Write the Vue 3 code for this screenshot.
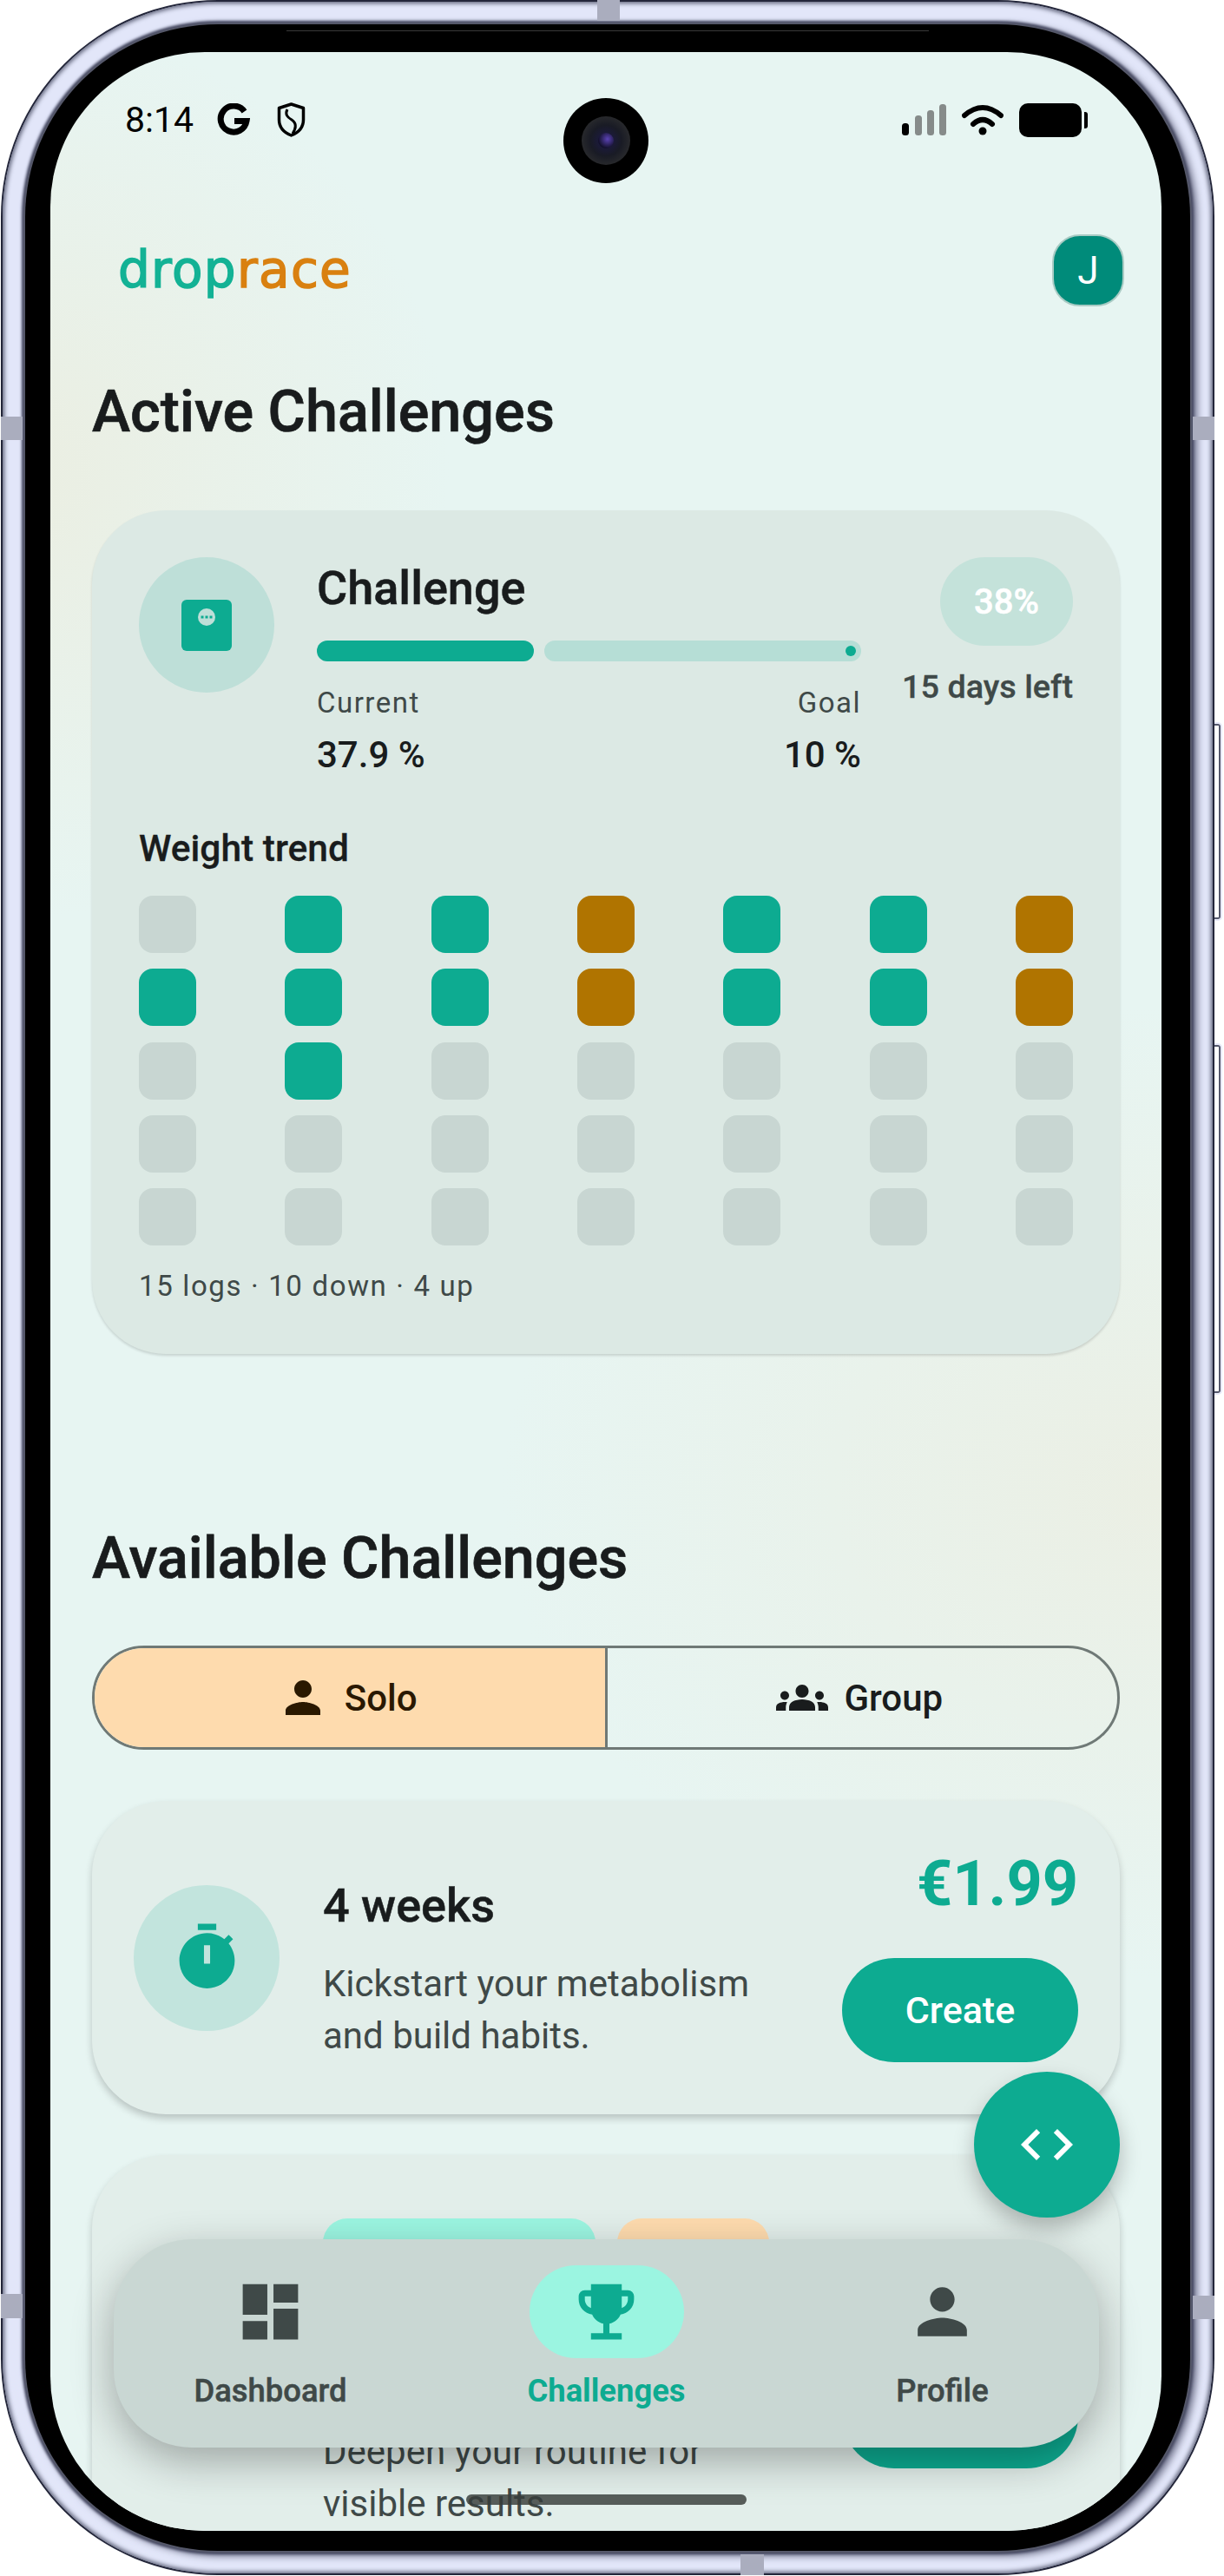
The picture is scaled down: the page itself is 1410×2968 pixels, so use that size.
<script setup>
const T = 't', O = 'o', G = 'g'
const columns = [
  [G, T, G, G, G],
  [T, T, T, G, G],
  [T, T, G, G, G],
  [O, O, G, G, G],
  [T, T, G, G, G],
  [T, T, G, G, G],
  [O, O, G, G, G],
]
const navItems = [
  { label: 'Dashboard', path: 'M3 13h8V3H3v10zm0 8h8v-6H3v6zm10 0h8V11h-8v10zm0-18v6h8V3h-8z' },
  { label: 'Challenges', active: true, path: 'M19 5h-2V3H7v2H5c-1.1 0-2 .9-2 2v1c0 2.55 1.92 4.63 4.39 4.94.63 1.5 1.98 2.63 3.61 2.96V19H7v2h10v-2h-4v-3.1c1.63-.33 2.98-1.46 3.61-2.96C19.08 12.63 21 10.55 21 8V7c0-1.1-.9-2-2-2zM5 8V7h2v3.82C5.84 10.4 5 9.3 5 8zm14 0c0 1.3-.84 2.4-2 2.82V7h2v1z' },
  { label: 'Profile', path: 'M12 12c2.21 0 4-1.79 4-4s-1.79-4-4-4-4 1.79-4 4 1.79 4 4 4zm0 2c-2.67 0-8 1.34-8 4v2h16v-2c0-2.66-5.33-4-8-4z' },
]
const timerPath = 'M15 1H9v2h6V1zm4.03 6.39l1.42-1.42c-.43-.51-.9-.99-1.41-1.41l-1.42 1.42C16.07 4.74 14.12 4 12 4c-4.97 0-9 4.03-9 9s4.02 9 9 9 9-4.03 9-9c0-2.12-.74-4.07-1.97-5.61zM13 14h-2V8h2v6z'
const personPath = 'M12 12c2.21 0 4-1.79 4-4s-1.79-4-4-4-4 1.79-4 4 1.79 4 4 4zm0 2c-2.67 0-8 1.34-8 4v2h16v-2c0-2.66-5.33-4-8-4z'
const groupPath = 'M12 12.75c1.63 0 3.07.39 4.24.9 1.08.48 1.76 1.56 1.76 2.73V18H6v-1.61c0-1.18.68-2.26 1.76-2.73 1.17-.52 2.61-.91 4.24-.91zM4 13c1.1 0 2-.9 2-2s-.9-2-2-2-2 .9-2 2 .9 2 2 2zm1.13 1.1C4.76 14.04 4.39 14 4 14c-.99 0-1.93.21-2.78.58C.48 14.9 0 15.62 0 16.43V18h4.5v-1.61c0-.83.23-1.61.63-2.29zM20 13c1.1 0 2-.9 2-2s-.9-2-2-2-2 .9-2 2 .9 2 2 2zm4 3.43c0-.81-.48-1.53-1.22-1.85C21.93 14.21 20.99 14 20 14c-.39 0-.76.04-1.13.1.4.68.63 1.46.63 2.29V18H24v-1.57zM12 6c1.66 0 3 1.34 3 3s-1.34 3-3 3-3-1.34-3-3 1.34-3 3-3z'
</script>

<template>
  <div class="page">
    <div class="side-btn btn-a"></div>
    <div class="side-btn btn-b"></div>
    <div class="rim">
      <div class="band">
        <div class="edge">
          <div class="bezel">
            <div class="screen">
              <div class="status">
                <div class="status-left">
                  <span class="time">8:14</span>
                  <svg class="g-icon" viewBox="0 0 38 38"><path d="M31.5 9.5A15 15 0 1 0 34 20.5H20" fill="none" stroke="#000" stroke-width="7"/></svg>
                  <svg class="shield" viewBox="0 0 33 40"><path d="M16.5 2L30.5 6.5V20C30.5 29 24 35 16.5 38C9 35 2.500 29 2.500 20V6.500Z" fill="none" stroke="#000" stroke-width="3.500" stroke-linejoin="round"/><path d="M12 8C9 14 12 17 17 20C23 24 22 30 18 36" fill="none" stroke="#000" stroke-width="3"/></svg>
                </div>
                <div class="status-right">
                  <svg class="signal" viewBox="0 0 51 36">
                    <rect x="0" y="22" width="8" height="14" rx="3.500" fill="#000"/>
                    <rect x="15" y="13" width="8" height="23" rx="3.500" fill="#868b8a"/>
                    <rect x="29" y="7" width="8" height="29" rx="3.500" fill="#868b8a"/>
                    <rect x="43" y="0" width="8" height="36" rx="3.500" fill="#868b8a"/>
                  </svg>
                  <svg class="wifi" viewBox="0 0 48 36">
                    <path d="M3 13Q24 -5 45 13" fill="none" stroke="#000" stroke-width="6" stroke-linecap="round"/>
                    <path d="M13 23Q24 13 35 23" fill="none" stroke="#000" stroke-width="6" stroke-linecap="round"/>
                    <circle cx="24" cy="31" r="4.500" fill="#000"/>
                  </svg>
                  <div class="battery"><span class="nub"></span></div>
                </div>
              </div>

              <div class="camera"><div class="lens"><div class="pupil"></div></div></div>

              <header class="header">
                <div class="logo"><span class="drop">drop</span><span class="race">race</span></div>
                <div class="avatar">J</div>
              </header>

              <div class="content">
                <h1 class="heading">Active Challenges</h1>

                <section class="active-card">
                  <div class="top-row">
                    <div class="icon-circle scale-circle">
                      <svg class="scale-icon" viewBox="0 0 58 59">
                        <rect width="58" height="59" rx="6" fill="#0dab91"/>
                        <circle cx="29" cy="20" r="10" fill="#bedfd8"/>
                        <rect x="22.500" y="18.500" width="3" height="3" fill="#0dab91"/>
                        <rect x="27.500" y="18.500" width="3" height="3" fill="#0dab91"/>
                        <rect x="32.500" y="18.500" width="3" height="3" fill="#0dab91"/>
                      </svg>
                    </div>
                    <div class="main-col">
                      <div class="title">Challenge</div>
                      <div class="progress">
                        <div class="fill"></div>
                        <div class="track"><span class="dot"></span></div>
                      </div>
                      <div class="stats">
                        <div><div class="stat-label">Current</div><div class="stat-value">37.9 %</div></div>
                        <div class="right"><div class="stat-label">Goal</div><div class="stat-value">10 %</div></div>
                      </div>
                    </div>
                    <div class="side-col">
                      <div class="percent">38%</div>
                      <div class="days">15 days left</div>
                    </div>
                  </div>

                  <div class="trend-title">Weight trend</div>
                  <div class="grid">
                    <div v-for="(col, i) in columns" :key="i" class="grid-col">
                      <div v-for="(c, j) in col" :key="j" class="cell" :class="'cell-' + c"></div>
                    </div>
                  </div>
                  <div class="trend-foot">15 logs · 10 down · 4 up</div>
                </section>

                <h1 class="heading available">Available Challenges</h1>

                <div class="segmented">
                  <div class="seg seg-on">
                    <svg class="seg-icon" viewBox="0 0 24 24"><path :d="personPath"/></svg>
                    <span>Solo</span>
                  </div>
                  <div class="seg">
                    <svg class="seg-icon" viewBox="0 0 24 24"><path :d="groupPath"/></svg>
                    <span>Group</span>
                  </div>
                </div>

                <section class="offer">
                  <div class="icon-circle offer-circle">
                    <svg class="mi teal" viewBox="0 0 24 24"><path fill-rule="evenodd" :d="timerPath"/></svg>
                  </div>
                  <div class="offer-text">
                    <div class="title">4 weeks</div>
                    <p class="desc">Kickstart your metabolism and build habits.</p>
                  </div>
                  <div class="offer-side">
                    <div class="price">€1.99</div>
                    <button class="create">Create</button>
                  </div>
                </section>

                <section class="offer offer-two">
                  <div class="icon-circle offer-circle">
                    <svg class="mi teal" viewBox="0 0 24 24"><path fill-rule="evenodd" :d="timerPath"/></svg>
                  </div>
                  <div class="offer-text two-text">
                    <div class="tags"><span class="tag tag-a"></span><span class="tag tag-b"></span></div>
                    <p class="desc">Deepen your routine for visible results.</p>
                  </div>
                  <div class="offer-side two-side">
                    <button class="create"></button>
                  </div>
                </section>
              </div>

              <button class="fab">
                <svg viewBox="0 0 24 24"><path d="M9.4 16.6L4.8 12l4.6-4.6L8 6l-6 6 6 6 1.400-1.400zm5.200 0l4.600-4.600-4.600-4.600L16 6l6 6-6 6-1.400-1.400z" fill="#fff"/></svg>
              </button>

              <nav class="nav">
                <div v-for="item in navItems" :key="item.label" class="nav-item" :class="{ active: item.active }">
                  <div class="nav-pill"><svg class="mi" viewBox="0 0 24 24"><path :d="item.path"/></svg></div>
                  <div class="nav-label">{{ item.label }}</div>
                </div>
              </nav>

              <div class="home-bar"></div>
            </div>
            <div class="notch-line"></div>
          </div>
        </div>
      </div>
      <i class="mark mark-top"></i>
      <i class="mark mark-bottom"></i>
      <i class="mark mark-l1"></i>
      <i class="mark mark-l2"></i>
      <i class="mark mark-r1"></i>
      <i class="mark mark-r2"></i>
    </div>
  </div>
</template>

<style scoped>
* { box-sizing: border-box; }
.page {
  position: relative;
  width: 1410px;
  height: 2968px;
  background: #fff;
  font-family: Roboto, "Liberation Sans", sans-serif;
  color: #191c1d;
  overflow: hidden;
}
.rim {
  position: absolute;
  left: 1px;
  top: 0;
  width: 1398px;
  height: 2967px;
  padding: 2px;
  border-radius: 250px;
  background: #23263a;
}
.band {
  height: 100%;
  padding: 24px;
  border-radius: 248px;
  background: #e2e6f9;
  box-shadow: inset 0 0 5px 2px #5f6379;
}
.edge {
  height: 100%;
  padding: 2px;
  border-radius: 224px;
  background: #55586a;
  box-shadow: 0 0 3px 2px #454860, 5px 3px 8px 1px #6d7088;
}
.bezel {
  position: relative;
  height: 100%;
  padding: 32px 29px 23px 29px;
  border-radius: 222px;
  background: #000;
}
.notch-line {
  position: absolute;
  left: 301px;
  top: 0;
  width: 740px;
  height: 8px;
  background: #000;
  border-bottom: 1px solid #3a3a3a;
}
.screen {
  position: relative;
  width: 1280px;
  height: 2856px;
  border-radius: 178px;
  overflow: hidden;
  background:
    radial-gradient(520px 520px at -60px 480px, #ebeee1 0%, rgba(235, 238, 225, 0) 100%),
    radial-gradient(760px 560px at 1280px 1660px, #ebefe4 0%, rgba(236, 239, 226, 0) 100%),
    #e7f5f2;
}
.status {
  display: flex;
  justify-content: space-between;
  align-items: center;
  height: 40px;
  margin-top: 58px;
  padding: 0 85px 0 86px;
}
.status-left, .status-right { display: flex; align-items: center; }
.time { font-size: 41px; line-height: 40px; color: #000; width: 106px; }
.g-icon { width: 38px; height: 38px; margin-right: 31px; }
.shield { width: 33px; height: 40px; }
.signal { width: 51px; height: 36px; margin-right: 18px; }
.wifi { width: 48px; height: 36px; margin-right: 18px; }
.battery { position: relative; width: 72px; height: 39px; border-radius: 10px; background: #000; margin-right: 7px; }
.nub { position: absolute; left: 75px; top: 10px; width: 4px; height: 19px; border-radius: 0 3px 3px 0; background: #000; }
.camera {
  position: absolute;
  left: 591px;
  top: 53px;
  width: 98px;
  height: 98px;
  border-radius: 50%;
  background: #000;
  display: flex;
  align-items: center;
  justify-content: center;
}
.lens {
  width: 56px;
  height: 56px;
  border-radius: 50%;
  background: radial-gradient(circle, #1b1a3a 0 20%, #191b25 45%, #2a2b2d 75%, #1d1d1d 100%);
  display: flex;
  align-items: center;
  justify-content: center;
}
.pupil { width: 18px; height: 18px; border-radius: 50%; background: radial-gradient(circle at 60% 40%, #5b43b5, #12102a 70%); }
.header {
  display: flex;
  justify-content: space-between;
  align-items: center;
  height: 83px;
  margin-top: 112px;
  padding: 0 43px 0 78px;
}
.logo {
  font-family: "DejaVu Sans", sans-serif;
  font-size: 58px;
  line-height: 83px;
  letter-spacing: 1.300px;
  -webkit-text-stroke: 1.500px currentColor;
}
.drop { color: #13b295; }
.race { color: #d98010; }
.avatar {
  width: 83px;
  height: 83px;
  border-radius: 32px;
  border: 2px solid #a9cbc4;
  background: #008b7a;
  color: #fff;
  font-size: 44px;
  display: flex;
  align-items: center;
  justify-content: center;
}
.content { padding: 0 48px; }
.heading {
  margin: 81px 0 0;
  font-size: 66.500px;
  line-height: 80px;
  font-weight: 500;
  color: #191c1d;
  -webkit-text-stroke: 0.700px currentColor;
}
.active-card {
  margin-top: 74px;
  height: 972px;
  padding: 54px 54px 0;
  border-radius: 85px;
  background: #dce9e4;
  box-shadow: 0 2px 3px rgba(0, 0, 0, 0.14);
}
.top-row { display: flex; gap: 49px; }
.icon-circle { flex: none; border-radius: 50%; display: flex; align-items: center; justify-content: center; }
.scale-circle { width: 156px; height: 156px; background: #bedfd8; }
.scale-icon { width: 58px; height: 59px; }
.main-col { flex: 1; min-width: 0; }
.title { font-size: 54px; line-height: 72px; font-weight: 500; -webkit-text-stroke: 0.500px currentColor; }
.progress { display: flex; gap: 12px; height: 24px; margin-top: 24px; }
.fill { width: 250px; border-radius: 12px; background: #0dab91; }
.track { position: relative; flex: 1; border-radius: 12px; background: #b6ded6; }
.dot { position: absolute; right: 6px; top: 6px; width: 12px; height: 12px; border-radius: 50%; background: #0dab91; }
.stats { display: flex; justify-content: space-between; margin-top: 26px; }
.right { text-align: right; }
.stat-label { font-size: 33px; line-height: 44px; color: #3f4948; letter-spacing: 1.500px; }
.stat-value { margin-top: 10px; font-size: 42px; line-height: 56px; font-weight: 500; }
.side-col { width: 195px; display: flex; flex-direction: column; align-items: flex-end; }
.percent {
  width: 153px;
  height: 102px;
  border-radius: 51px;
  background: #c4e2da;
  color: #fff;
  font-size: 40px;
  font-weight: 500;
  -webkit-text-stroke: 0.500px currentColor;
  display: flex;
  align-items: center;
  justify-content: center;
}
.days { margin-top: 23px; font-size: 37.800px; line-height: 48px; font-weight: 500; color: #3f4948; white-space: nowrap; -webkit-text-stroke: 0.300px currentColor; }
.trend-title { margin-top: 52px; font-size: 42.500px; line-height: 56px; font-weight: 500; -webkit-text-stroke: 0.300px currentColor; }
.grid { display: flex; justify-content: space-between; margin-top: 26px; }
.grid-col { display: flex; flex-direction: column; gap: 18.300px; }
.cell { width: 66px; height: 66px; border-radius: 16px; }
.cell-g { background: #c8d6d2; }
.cell-t { background: #0dab91; }
.cell-o { background: #b07400; }
.trend-foot { margin-top: 25px; font-size: 33px; line-height: 44px; letter-spacing: 1.650px; color: #3f4948; }
.available { margin-top: 195px; }
.segmented {
  display: flex;
  margin-top: 61px;
  height: 120px;
  border: 3px solid #6f7976;
  border-radius: 60px;
  overflow: hidden;
}
.seg { flex: 1; display: flex; align-items: center; justify-content: center; gap: 18px; padding-right: 6px; font-size: 42px; font-weight: 500; color: #191c1d; }
.seg + .seg { border-left: 3px solid #6f7976; }
.seg-on { background: #fedbae; color: #2a1800; }
.seg-icon { width: 60px; height: 60px; fill: currentColor; }
.offer {
  display: flex;
  align-items: center;
  height: 361px;
  margin-top: 59px;
  padding: 0 48px;
  border-radius: 85px;
  background: #e2eeea;
  box-shadow: 0 5px 9px rgba(0, 0, 0, 0.2);
}
.offer-circle { width: 168px; height: 168px; background: #c2e4dd; }
.mi { width: 85px; height: 85px; fill: currentColor; display: block; }
.teal { color: #0dab91; }
.offer-text { flex: 1; min-width: 0; margin: 25px 50px 0; }
.desc { margin: 24px 0 0; font-size: 42px; line-height: 60px; color: #3f4948; }
.offer-side { width: 272px; margin-bottom: 8px; display: flex; flex-direction: column; align-items: flex-end; }
.price { font-size: 72px; line-height: 88px; font-weight: 700; color: #0dab91; }
.create {
  width: 272px;
  height: 120px;
  margin-top: 41px;
  border: 0;
  border-radius: 60px;
  background: #0dab91;
  color: #fff;
  font-family: inherit;
  font-size: 43px;
  font-weight: 500;
}
.offer-two { height: 504px; margin-top: 47px; }
.two-text { align-self: flex-start; margin-top: 73px; }
.tags { display: flex; gap: 25px; margin-bottom: 167px; }
.tag { height: 72px; border-radius: 28px; }
.tag-a { width: 314px; background: #9bf5e1; }
.tag-b { width: 175px; background: #fedbae; }
.two-side { align-self: flex-start; margin: 0; }
.two-side .create { margin-top: 241px; }
.fab {
  position: absolute;
  right: 48px;
  bottom: 361px;
  width: 168px;
  height: 168px;
  border: 0;
  padding: 0;
  border-radius: 50%;
  background: #0dab91;
  box-shadow: 0 12px 24px rgba(0, 0, 0, 0.25);
  display: flex;
  align-items: center;
  justify-content: center;
}
.fab svg { width: 72px; height: 72px; }
.nav {
  position: absolute;
  left: 73px;
  top: 2520px;
  width: 1135px;
  height: 240px;
  padding-top: 30px;
  border-radius: 90px;
  background: #c9d7d3;
  box-shadow: 0 16px 48px rgba(0, 0, 0, 0.3);
  display: grid;
  grid-template-columns: repeat(3, 387px);
  justify-content: center;
}
.nav-item { display: flex; flex-direction: column; align-items: center; color: #3f4948; }
.nav-pill { width: 178px; height: 107px; border-radius: 54px; display: flex; align-items: center; justify-content: center; }
.nav-label { margin-top: 14px; font-size: 36.400px; line-height: 48px; font-weight: 500; -webkit-text-stroke: 0.500px currentColor; }
.active { color: #0dab91; }
.active .nav-label { font-weight: 700; -webkit-text-stroke: 0; }
.active .nav-pill { background: #9bf5e1; }
.home-bar {
  position: absolute;
  left: 479px;
  top: 2814px;
  width: 323px;
  height: 12px;
  border-radius: 6px;
  background: rgba(55, 60, 57, 0.82);
}
.side-btn {
  position: absolute;
  left: 1397px;
  width: 11px;
  border-radius: 0 5px 5px 0;
  border: 2px solid #e7e9f8;
  border-left: 0;
  box-shadow: inset -2px 0 0 #54576b, inset 0 2px 0 #54576b, inset 0 -2px 0 #54576b;
  background: #fff;
}
.btn-a { top: 832px; height: 229px; }
.btn-b { top: 1202px; height: 405px; }
.mark { position: absolute; background: #aaadbe; }
.mark-top { left: 687px; top: 0; width: 26px; height: 24px; }
.mark-bottom { left: 852px; bottom: 0; width: 27px; height: 24px; }
.mark-l1 { left: 0; top: 480px; width: 25px; height: 27px; }
.mark-l2 { left: 0; top: 2643px; width: 25px; height: 28px; }
.mark-r1 { right: 0; top: 480px; width: 25px; height: 27px; }
.mark-r2 { right: 0; top: 2645px; width: 25px; height: 27px; }
</style>
